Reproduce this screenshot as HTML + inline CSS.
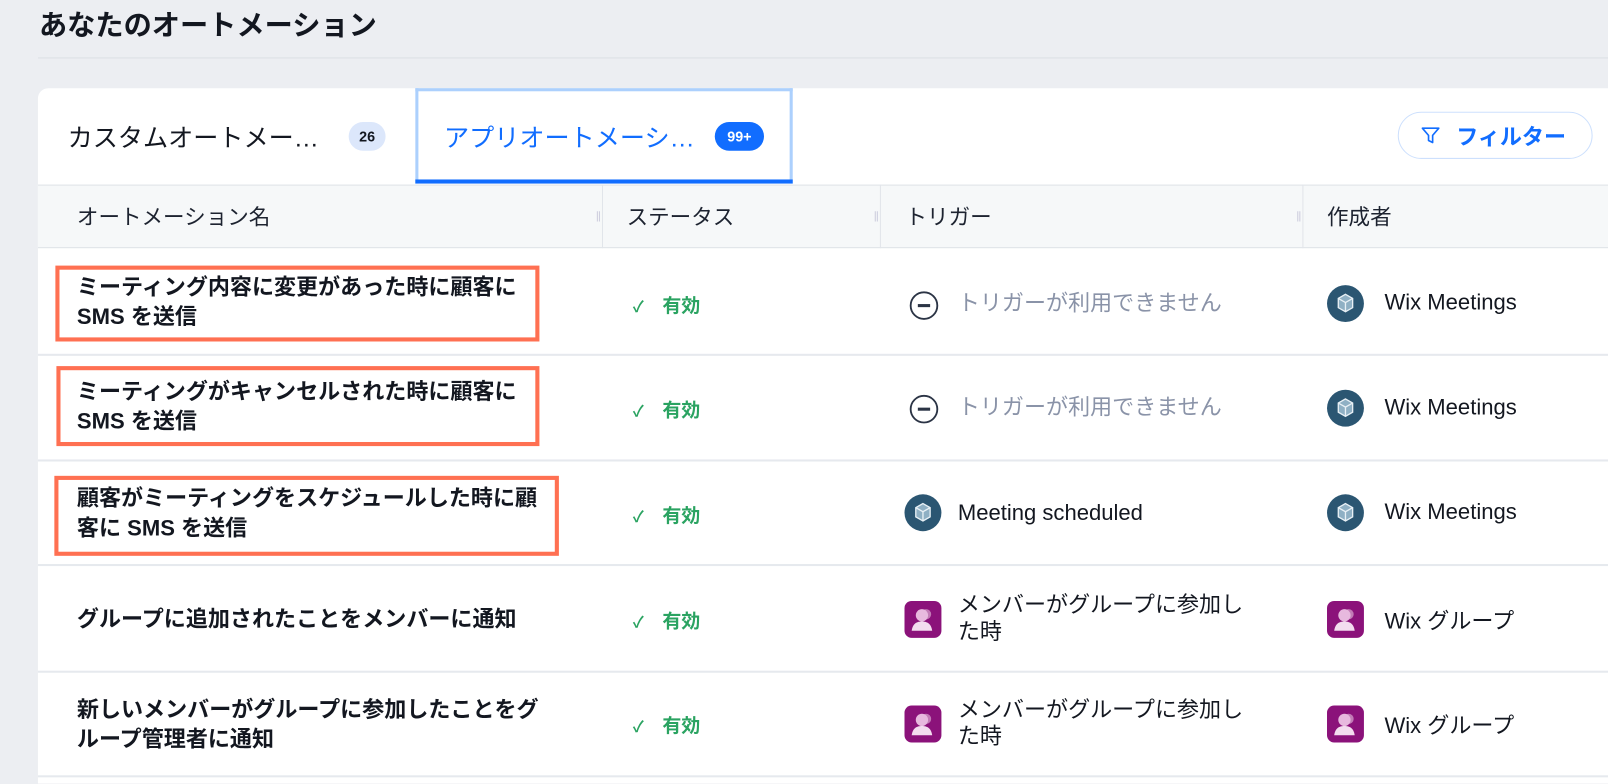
<!DOCTYPE html>
<html><head><meta charset="utf-8"><style>
*{box-sizing:border-box;margin:0;padding:0}
html{width:1608px;height:784px;overflow:hidden}
body{width:1608px;height:784px;overflow:hidden;background:#eceef2;font-family:"Liberation Sans","Noto Sans CJK JP",sans-serif;color:#131720;position:relative}
#w{position:absolute;left:0;top:0;width:1568px;height:764px;overflow:hidden;transform:scale(1.02551);transform-origin:0 0}
.abs{position:absolute}
h1{position:absolute;left:38px;top:2px;font-size:27.5px;font-weight:bold;color:#131720}
.sep{position:absolute;left:37px;right:0;top:56px;height:1px;background:#dcdfe5}
.card{position:absolute;left:37px;top:86px;width:1540px;height:678px;background:#fff;border-radius:10px 0 0 0}
.hdr{position:absolute;left:37px;top:180px;width:1540px;height:62px;background:#f6f8f9;border-top:1px solid #dfe3e8;border-bottom:1px solid #dfe3e8}
.vl{position:absolute;top:180px;height:62px;width:1px;background:#e1e5ea}
.hd{position:absolute;top:196px;font-size:21px;color:#1d2330}
.hl{position:absolute;left:37px;width:1540px;height:2px;background:#e6e9ee}
.nm{position:absolute;left:75px;font-size:21.5px;font-weight:bold;line-height:29px;color:#131720;white-space:nowrap}
.box{position:absolute;border:4px solid #ff7052}
.st{position:absolute;left:617px;font-size:18.5px;color:#2aa361;font-weight:bold}
.st span{margin-right:18px;font-size:15px}
.tr{position:absolute;left:934px;font-size:21.5px;line-height:26px;white-space:nowrap}
.gray{color:#8a93a8}
.cr{position:absolute;left:1350px;font-size:21.5px;white-space:nowrap}
.mt{position:absolute;width:36px;height:36px;border-radius:50%;background:#2b5672}
.gp{position:absolute;width:36px;height:36px;border-radius:7px;background:#8b127a}
</style></head><body><div id="w">
<h1>あなたのオートメーション</h1>
<div class="sep"></div>
<div class="card"></div>
<div class="abs" style="left:66px;top:116px;font-size:24.5px;color:#131720">カスタムオートメー…</div>
<div class="abs" style="left:340px;top:119px;width:36px;height:28px;border-radius:14px;background:#dce7fb;font-size:14px;font-weight:bold;text-align:center;line-height:28px">26</div>
<div class="abs" style="left:405px;top:86px;width:368px;height:93px;border:3px solid #acd0fd;border-bottom:none"></div>
<div class="abs" style="left:405px;top:175px;width:368px;height:4px;background:#116dff"></div>
<div class="abs" style="left:433px;top:116px;font-size:24.5px;color:#116dff">アプリオートメーシ…</div>
<div class="abs" style="left:697px;top:119px;width:48px;height:28px;border-radius:14px;background:#116dff;color:#fff;font-size:14px;font-weight:bold;text-align:center;line-height:28px">99+</div>
<div class="abs" style="left:1363px;top:109px;width:190px;height:46px;border:1px solid #cde0fd;border-radius:23px"></div>
<svg class="abs" style="left:1385px;top:122px" width="20" height="20" viewBox="0 0 20 20"><path d="M2 3h16l-6 7v7l-4-2v-5z" fill="none" stroke="#116dff" stroke-width="1.6" stroke-linejoin="round"/></svg>
<div class="abs" style="left:1420px;top:117px;font-size:21.5px;font-weight:bold;color:#116dff">フィルター</div>
<div class="hdr"></div>
<div class="vl" style="left:587px"></div><div class="vl" style="left:858px"></div><div class="vl" style="left:1270px"></div>
<div class="abs" style="left:582px;top:206px;width:3px;height:10px;border-left:1px solid #ccd;border-right:1px solid #ccd"></div>
<div class="abs" style="left:853px;top:206px;width:3px;height:10px;border-left:1px solid #ccd;border-right:1px solid #ccd"></div>
<div class="abs" style="left:1265px;top:206px;width:3px;height:10px;border-left:1px solid #ccd;border-right:1px solid #ccd"></div>
<div class="hd" style="left:75px">オートメーション名</div>
<div class="hd" style="left:611px">ステータス</div>
<div class="hd" style="left:883px">トリガー</div>
<div class="hd" style="left:1294px">作成者</div>

<div class="hl" style="top:345px"></div><div class="hl" style="top:448px"></div><div class="hl" style="top:550px"></div><div class="hl" style="top:654px"></div><div class="hl" style="top:756px"></div>

<div class="box" style="left:54px;top:259px;width:472px;height:74px"></div>
<div class="nm" style="top:266px">ミーティング内容に変更があった時に顧客に<br>SMS を送信</div>
<div class="box" style="left:55px;top:357px;width:471px;height:78px"></div>
<div class="nm" style="top:368px">ミーティングがキャンセルされた時に顧客に<br>SMS を送信</div>
<div class="box" style="left:53px;top:464px;width:492px;height:78px"></div>
<div class="nm" style="top:472px">顧客がミーティングをスケジュールした時に顧<br>客に SMS を送信</div>
<div class="nm" style="top:590px">グループに追加されたことをメンバーに通知</div>
<div class="nm" style="top:678px">新しいメンバーがグループに参加したことをグ<br>ループ管理者に通知</div>

<div class="st" style="top:284px"><span>✓</span>有効</div>
<div class="st" style="top:386px"><span>✓</span>有効</div>
<div class="st" style="top:489px"><span>✓</span>有効</div>
<div class="st" style="top:592px"><span>✓</span>有効</div>
<div class="st" style="top:694px"><span>✓</span>有効</div>

<svg class="abs" style="left:886px;top:283px" width="30" height="30"><circle cx="15" cy="15" r="13" fill="none" stroke="#2b3445" stroke-width="1.8"/><rect x="9" y="13.5" width="12" height="3" fill="#2b3445"/></svg>
<div class="tr gray" style="top:283px">トリガーが利用できません</div>
<svg class="abs" style="left:886px;top:384px" width="30" height="30"><circle cx="15" cy="15" r="13" fill="none" stroke="#2b3445" stroke-width="1.8"/><rect x="9" y="13.5" width="12" height="3" fill="#2b3445"/></svg>
<div class="tr gray" style="top:384px">トリガーが利用できません</div>
<div class="mt" style="left:882px;top:482px"></div>
<svg class="abs" style="left:882px;top:482px" width="36" height="36"><path d="M18 9l7 4v9l-7 4-7-4v-9z" fill="#8fb0c4" stroke="#e8f0f5" stroke-width="1.3"/><path d="M11 13l7 4 7-4M18 17v9" fill="none" stroke="#e8f0f5" stroke-width="1.3"/></svg>
<div class="tr" style="top:487px">Meeting scheduled</div>
<div class="gp" style="left:882px;top:586px"></div>
<svg class="abs" style="left:882px;top:586px" width="36" height="36"><circle cx="21" cy="13" r="5" fill="#c27bb6"/><circle cx="17" cy="14" r="6" fill="#e7b9de"/><path d="M7 29c1-7 5-9 10-9s9 2 10 9z" fill="#f3dcef"/></svg>
<div class="tr" style="top:577px">メンバーがグループに参加し<br>た時</div>
<div class="gp" style="left:882px;top:688px"></div>
<svg class="abs" style="left:882px;top:688px" width="36" height="36"><circle cx="21" cy="13" r="5" fill="#c27bb6"/><circle cx="17" cy="14" r="6" fill="#e7b9de"/><path d="M7 29c1-7 5-9 10-9s9 2 10 9z" fill="#f3dcef"/></svg>
<div class="tr" style="top:679px">メンバーがグループに参加し<br>た時</div>

<div class="mt" style="left:1294px;top:278px"></div>
<svg class="abs" style="left:1294px;top:278px" width="36" height="36"><path d="M18 9l7 4v9l-7 4-7-4v-9z" fill="#8fb0c4" stroke="#e8f0f5" stroke-width="1.3"/><path d="M11 13l7 4 7-4M18 17v9" fill="none" stroke="#e8f0f5" stroke-width="1.3"/></svg>
<div class="cr" style="top:283px">Wix Meetings</div>
<div class="mt" style="left:1294px;top:380px"></div>
<svg class="abs" style="left:1294px;top:380px" width="36" height="36"><path d="M18 9l7 4v9l-7 4-7-4v-9z" fill="#8fb0c4" stroke="#e8f0f5" stroke-width="1.3"/><path d="M11 13l7 4 7-4M18 17v9" fill="none" stroke="#e8f0f5" stroke-width="1.3"/></svg>
<div class="cr" style="top:385px">Wix Meetings</div>
<div class="mt" style="left:1294px;top:482px"></div>
<svg class="abs" style="left:1294px;top:482px" width="36" height="36"><path d="M18 9l7 4v9l-7 4-7-4v-9z" fill="#8fb0c4" stroke="#e8f0f5" stroke-width="1.3"/><path d="M11 13l7 4 7-4M18 17v9" fill="none" stroke="#e8f0f5" stroke-width="1.3"/></svg>
<div class="cr" style="top:487px">Wix Meetings</div>
<div class="gp" style="left:1294px;top:586px"></div>
<svg class="abs" style="left:1294px;top:586px" width="36" height="36"><circle cx="21" cy="13" r="5" fill="#c27bb6"/><circle cx="17" cy="14" r="6" fill="#e7b9de"/><path d="M7 29c1-7 5-9 10-9s9 2 10 9z" fill="#f3dcef"/></svg>
<div class="cr" style="top:589px">Wix グループ</div>
<div class="gp" style="left:1294px;top:688px"></div>
<svg class="abs" style="left:1294px;top:688px" width="36" height="36"><circle cx="21" cy="13" r="5" fill="#c27bb6"/><circle cx="17" cy="14" r="6" fill="#e7b9de"/><path d="M7 29c1-7 5-9 10-9s9 2 10 9z" fill="#f3dcef"/></svg>
<div class="cr" style="top:691px">Wix グループ</div>
</div></body></html>
